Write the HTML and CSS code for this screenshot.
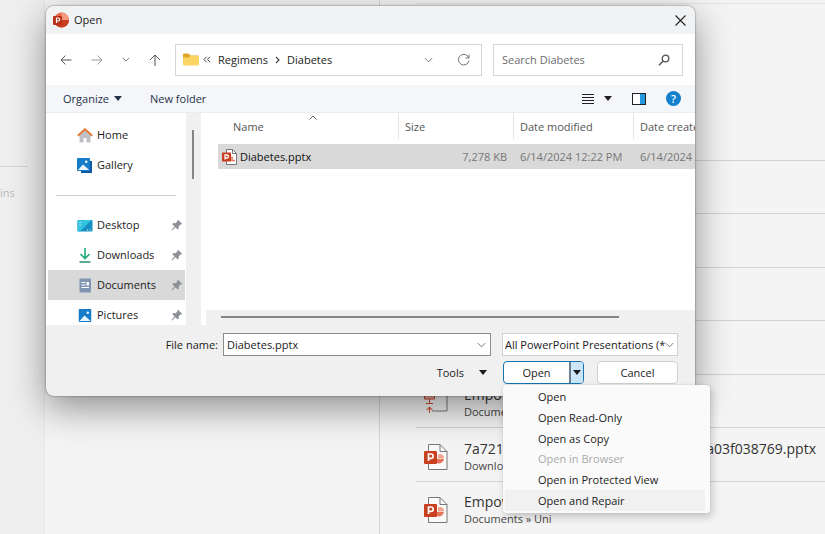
FILE: index.html
```html
<!DOCTYPE html>
<html lang="en">
<head>
<meta charset="utf-8">
<title>Open</title>
<link rel="stylesheet" href="styles.css">
</head>
<body>
<svg class="defs" aria-hidden="true">
  <symbol id="chevron" viewBox="0 0 10 6"><path d="M1 1l4 4 4-4" fill="none" stroke="currentColor"/></symbol>
  <symbol id="caret" viewBox="0 0 8 5"><path d="M0 0h8L4 5z" fill="currentColor"/></symbol>
  <symbol id="pin" viewBox="0 0 12 12"><path d="M7 .8L11.3 5l-1 .6-.9-.1-1.7 1.9.1 2-1.1 1.1-2.2-2.3L1 11.5l-.6-.5 3.2-3.5L1.300 5.200l1.100-1.100 2.100.2 1.900-1.800-.1-.9z" fill="#8d9197"/></symbol>
  <symbol id="ppt" viewBox="0 0 26 28">
    <path d="M5.500 1.500h11.500l7 7v18H5.500z" fill="#fafafa" stroke="#777"/>
    <path d="M17 1.500v7h7" fill="none" stroke="#777"/>
    <path d="M15 11.500a4 4 0 0 1 6 4h-6z" fill="#f3a58f"/>
    <path d="M14 16h7a5 5 0 0 1-7 4z" fill="#e8745a"/>
    <rect x="1" y="8" width="13" height="13" rx="1" fill="#c8401f"/>
    <path d="M5.500 18v-7h2.500a2.200 2.200 0 0 1 0 4.400h-2.500" fill="none" stroke="#fff" stroke-width="1.700"/>
  </symbol>
  <symbol id="ppt-small" viewBox="0 0 15 16">
    <path d="M4.500.5h6l4 4v11h-10z" fill="#fff" stroke="#777"/>
    <path d="M10.500.5v4h4" fill="none" stroke="#777"/>
    <path d="M10 7.500v4h3" fill="none" stroke="#e8745a" stroke-width="1.500"/>
    <rect y="3.500" width="9" height="9" fill="#c8401f"/>
    <path d="M3 10.500V6h2a1.500 1.500 0 0 1 0 3H3" fill="none" stroke="#fff" stroke-width="1.300"/>
  </symbol>
  <symbol id="picture" viewBox="0 0 14 14">
    <rect width="14" height="14" rx="1" fill="#167bc9"/>
    <path d="M1 13l5.500-6 6.500 6z" fill="#e9f6ff"/><circle cx="10" cy="4" r="1.300" fill="#fff"/>
  </symbol>
</svg>

<div class="app">
  <aside class="rail"><div class="rail-line"></div><span class="rail-text">ins</span></aside>
  <div class="pane"></div>
  <main class="recent">
    <ul class="files">
      <li></li><li></li><li></li><li></li>
      <li>
        <svg class="doc" viewBox="0 0 26 28"><path d="M10 2h14v20H9" fill="none" stroke="#777"/><path d="M1.500 3h10v7h-10zM6.500 10v4M3 14.500h7M6.500 24v-6M3.500 21l3-3 3 3" fill="#f2b5a8" stroke="#d0452c"/></svg>
        <div class="file"><span class="file-name">Empo</span><span class="file-path">Documents</span></div>
      </li>
      <li>
        <svg class="doc"><use href="#ppt"/></svg>
        <div class="file"><span class="file-name"><span>7a721</span><span>7a03f038769.pptx</span></span><span class="file-path">Downloads</span></div>
      </li>
      <li>
        <svg class="doc"><use href="#ppt"/></svg>
        <div class="file"><span class="file-name">Empow</span><span class="file-path">Documents » Uni</span></div>
      </li>
    </ul>
  </main>
</div>

<section class="dialog" role="dialog" aria-labelledby="dialog-title">
  <header class="titlebar">
    <svg class="logo" viewBox="0 0 16 16"><circle cx="8.500" cy="8" r="7.500" fill="#e8694a"/><path d="M8.500.5A7.500 7.500 0 0 1 16 8H8.500z" fill="#f39a7c"/><path d="M1 8h15a7.500 7.500 0 0 1-15 0z" fill="#c93f20"/><rect y="4" width="9" height="9" rx="1" fill="#b7321a"/><path d="M3.500 11V6h1.700a1.500 1.500 0 0 1 0 3H3.500" fill="none" stroke="#fff" stroke-width="1.200"/></svg>
    <h1 id="dialog-title">Open</h1>
    <button class="close" aria-label="Close"><svg viewBox="0 0 11 11"><path d="M.5.5l10 10M10.500.5l-10 10" stroke="#222" stroke-width="1.100"/></svg></button>
  </header>

  <nav class="navbar">
    <div class="arrows">
      <button aria-label="Back"><svg width="12" height="12" viewBox="0 0 12 12"><path d="M11.500 6H1M5.500 1.500L1 6l4.500 4.500" fill="none" stroke="#555"/></svg></button>
      <button aria-label="Forward"><svg width="12" height="12" viewBox="0 0 12 12"><path d="M.5 6H11M6.500 1.500L11 6l-4.500 4.500" fill="none" stroke="#999"/></svg></button>
      <button aria-label="Recent locations"><svg width="8" height="5"><use href="#chevron"/></svg></button>
      <button aria-label="Up"><svg width="12" height="12" viewBox="0 0 12 12"><path d="M6 12V1M1 6l5-5 5 5" fill="none" stroke="#555"/></svg></button>
    </div>
    <div class="address">
      <svg class="folder" viewBox="0 0 16 13"><path d="M0 1.500Q0 .5 1 .5h4.500L7.500 2.500H15q1 0 1 1V6H0z" fill="#e0a526"/><path d="M0 4.500h6L7.500 3H15q1 0 1 1v7.500q0 1-1 1H1q-1 0-1-1z" fill="#fbd564"/></svg>
      <svg class="crumbs-more" viewBox="0 0 8 7"><path d="M3.500.8L1 3.500l2.500 2.700M7 .8L4.500 3.500 7 6.200" fill="none" stroke="#444"/></svg>
      <button>Regimens</button>
      <svg class="crumb-sep" viewBox="0 0 5 8"><path d="M1 1l3 3-3 3" fill="none" stroke="#444" stroke-width="1.200"/></svg>
      <button class="current">Diabetes</button>
      <button aria-label="Previous locations"><svg width="9" height="6"><use href="#chevron"/></svg></button>
      <button aria-label="Refresh" class="refresh"><svg width="13" height="13" viewBox="0 0 13 13"><path d="M11.800 5A5.300 5.300 0 1 0 12 7.500M12 1.500V5H8.500" fill="none" stroke="#777"/></svg></button>
    </div>
    <label class="search"><input type="text" placeholder="Search Diabetes" aria-label="Search Diabetes"><svg width="12" height="12" viewBox="0 0 12 12"><circle cx="7.500" cy="4.500" r="3.300" fill="none" stroke="#555" stroke-width="1.300"/><path d="M5.200 7L1 11.200" stroke="#555" stroke-width="1.400"/></svg></label>
  </nav>

  <div class="toolbar">
    <button>Organize <svg width="8" height="5"><use href="#caret"/></svg></button>
    <button>New folder</button>
    <div class="views">
      <button aria-label="View"><svg width="12" height="10" viewBox="0 0 12 10"><path d="M0 .5h12M0 3.500h12M0 6.500h12M0 9.500h12" stroke="#222"/></svg></button>
      <button aria-label="View options"><svg width="8" height="5"><use href="#caret"/></svg></button>
      <button aria-label="Preview pane"><svg width="14" height="12" viewBox="0 0 14 12"><rect x=".5" y=".5" width="13" height="11" fill="#fff" stroke="#222"/><rect x="8" y="1" width="5" height="10" fill="#239ae0"/></svg></button>
      <button aria-label="Help" class="help">?</button>
    </div>
  </div>

  <div class="content">
    <div class="places">
      <ul>
        <li><svg class="place" viewBox="0 0 16 15"><path d="M2.500 7L8 2l5.500 5v7.500h-4V10h-3v4.500h-4z" fill="#bfc1c4"/><path d="M.8 7.800L8 1.200l7.200 6.600" fill="none" stroke="#e27a35" stroke-width="1.900"/></svg><span>Home</span></li>
        <li><svg class="place" viewBox="0 0 16 15"><path d="M4 3h11v12H4z" fill="#0c5aa5"/><use href="#picture" width="13" height="13"/></svg><span>Gallery</span></li>
        <li class="divider"><hr></li>
        <li><svg class="place" viewBox="0 0 16 15"><rect x=".5" y="2" width="15" height="11.500" rx="1" fill="#168fc2"/><path d="M.5 3q0-1 1-1h13L3 13.500H1.500q-1 0-1-1z" fill="#32c3df"/><path d="M2.500 4.500h1.200M2.500 7h1.200M10 12h1M12.500 12h1" stroke="#fff"/></svg><span>Desktop</span><svg class="pin"><use href="#pin"/></svg></li>
        <li><svg class="place" viewBox="0 0 16 15"><path d="M8 0v10.500M3.500 6L8 10.500 12.500 6" fill="none" stroke="#20ad7c" stroke-width="1.600"/><path d="M2.500 14h11" stroke="#238f70" stroke-width="1.500"/></svg><span>Downloads</span><svg class="pin"><use href="#pin"/></svg></li>
        <li class="selected"><svg class="place" viewBox="0 0 16 15"><rect x="2.500" y=".5" width="11.500" height="14" rx="1" fill="#8095b2"/><path d="M4.500 4.500h4M4.500 7h4M4.500 9.500h7.500" stroke="#fff"/><path d="M9.500 4h2.500v3.500H9.500z" fill="#fff"/></svg><span>Documents</span><svg class="pin"><use href="#pin"/></svg></li>
        <li><svg class="place" viewBox="0 0 16 15"><use href="#picture" x="1.500" y="1" width="13" height="13"/></svg><span>Pictures</span><svg class="pin"><use href="#pin"/></svg></li>
      </ul>
    </div>
    <div class="vscroll"><div class="vthumb"></div></div>
    <div class="listing">
      <div class="table-area">
        <table>
          <colgroup><col class="c-name"><col class="c-size"><col class="c-modified"><col class="c-created"></colgroup>
          <thead><tr><th class="sorted">Name<svg width="8" height="5" viewBox="0 0 8 5"><path d="M.5 4.500L4 1l3.500 3.500" fill="none" stroke="#666"/></svg></th><th>Size</th><th>Date modified</th><th>Date created</th></tr></thead>
          <tbody><tr><td class="name"><svg width="15" height="16"><use href="#ppt-small"/></svg>Diabetes.pptx</td><td class="size">7,278 KB</td><td>6/14/2024 12:22 PM</td><td>6/14/2024 12:22 PM</td></tr></tbody>
        </table>
      </div>
      <div class="hscroll"><div class="hthumb"></div></div>
    </div>
  </div>

  <footer class="footer">
    <div class="name-row">
      <label for="filename">File name:</label>
      <div class="combo"><input id="filename" type="text" value="Diabetes.pptx"><svg width="9" height="6"><use href="#chevron"/></svg></div>
      <div class="type"><select aria-label="File type"><option>All PowerPoint Presentations (*</option></select><svg width="9" height="6"><use href="#chevron"/></svg></div>
    </div>
    <div class="action-row">
      <button class="tools">Tools <svg width="8" height="5"><use href="#caret"/></svg></button>
      <div class="split">
        <button class="open">Open</button><button class="drop" aria-label="Open options" aria-expanded="true"><svg width="8" height="5"><use href="#caret"/></svg></button>
        <div class="menu" role="menu">
          <button role="menuitem">Open</button>
          <button role="menuitem">Open Read-Only</button>
          <button role="menuitem">Open as Copy</button>
          <button role="menuitem" disabled>Open in Browser</button>
          <button role="menuitem">Open in Protected View</button>
          <button role="menuitem" class="hover">Open and Repair</button>
        </div>
      </div>
      <button class="cancel">Cancel</button>
    </div>
  </footer>
</section>
</body>
</html>
```
FILE: styles.css
```css
* { box-sizing: border-box; }
body {
  margin: 0;
  height: 100vh;
  overflow: hidden;
  position: relative;
  background: #f4f4f4;
  color: #1c1c1c;
  font: 11px/16px "Open Sans", "Noto Sans", sans-serif;
}
button, input, select { font: inherit; color: inherit; margin: 0; padding: 0; border: 0; background: none; outline: 0; }
button { display: flex; align-items: center; justify-content: center; white-space: nowrap; }
ul { list-style: none; margin: 0; padding: 0; }
svg { flex: none; display: block; }
.defs { position: absolute; width: 0; height: 0; }

/* Start screen behind the dialog */
.app { display: grid; grid-template-columns: 45px 335px 1fr; height: 100%; }
.rail { background: #efefef; border-right: 1px solid #e6e6e6; padding-top: 166px; }
.rail-line { width: 28px; border-top: 1px solid #d4d4d4; }
.rail-text { display: block; margin-top: 18px; color: #bababa; }
.pane { border-right: 1px solid #d6d6d6; }
.recent { padding: 3px 0 0 36px; display: flex; min-width: 0; }
.files { flex: 1; display: flex; flex-direction: column; border-top: 1px solid #e2e2e2; padding-top: 156px; min-width: 0; }
.files li { flex: 1; border-top: 1px solid #d2d2d2; display: flex; align-items: center; gap: 15px; padding: 5px 9px 0 7px; min-height: 0; }
.doc { width: 26px; height: 28px; }
.file { flex: 1; display: flex; flex-direction: column; }
.file-name { display: flex; justify-content: space-between; font-size: 14px; line-height: 18px; color: #333; }
.file-path { color: #444; }

/* Dialog frame */
.dialog {
  position: absolute;
  top: 6px;
  left: 46px;
  right: 130px;
  background: #f0f0f0;
  border-radius: 8px;
  box-shadow: 0 0 2px rgba(0,0,0,.6), 0 12px 36px rgba(0,0,0,.42);
}
.titlebar { display: flex; align-items: center; height: 28px; padding: 0 9px 0 7px; gap: 5px; background: #f0f2f4; border-radius: 8px 8px 0 0; }
.logo { width: 16px; height: 16px; }
.titlebar h1 { flex: 1; margin: 0; font-size: 11px; font-weight: 400; }
.close svg { width: 11px; height: 11px; }

.navbar { display: flex; align-items: center; height: 51px; padding: 0 12px 0 14px; gap: 11px; background: #fff; }
.arrows { display: flex; align-items: center; justify-content: space-between; width: 101px; margin-right: 3px; color: #555; }
.address, .search { display: flex; align-items: center; height: 32px; border: 1px solid #d5d5d5; }
.address { flex: 1; padding: 0 11px 0 7px; color: #222; }
.folder { width: 16px; height: 13px; margin-right: 4px; }
.crumbs-more { width: 8px; height: 7px; margin-right: 7px; }
.crumb-sep { width: 5px; height: 8px; margin: 0 7px; }
.current { margin-right: auto; }
.address svg { color: #666; }
.refresh { margin-left: 24px; }
.search { width: 190px; padding: 0 12px 0 8px; }
.search input { flex: 1; min-width: 0; }
.search input::placeholder { color: #6c6c6c; opacity: 1; }

.toolbar { display: flex; align-items: center; height: 28px; padding: 0 14px 0 17px; gap: 28px; background: #f4f6f9; border-bottom: 1px solid #ebecef; color: #27334d; }
.toolbar button { gap: 5px; }
.views { margin-left: auto; display: flex; align-items: center; color: #222; }
.views button { margin-left: 10px; }
.views button:nth-child(n+3) { margin-left: 20px; }
.views .help { width: 15px; height: 15px; border-radius: 50%; background: #1280cc; color: #fff; font-weight: 600; }

/* Places and file list */
.content { display: flex; height: 212px; background: #fff; }
.places { width: 140px; padding: 7px 1px 0 2px; overflow: hidden; }
.places li { display: flex; align-items: center; height: 30px; padding: 0 2px 0 29px; gap: 4px; }
.places li span { flex: 1; }
.places .divider { padding: 0 9px 0 8px; }
.divider hr { flex: 1; margin: 0; border: 0; border-top: 1px solid #cfcfcf; }
.places .selected { background: #d9d9da; }
.place { width: 16px; height: 15px; }
.pin { width: 12px; height: 12px; }
.vscroll { width: 15px; background: #f0f0f0; padding: 17px 7px 0 6px; }
.vthumb { height: 49px; background: #858585; }
.listing { flex: 1; min-width: 0; display: flex; flex-direction: column; }
.table-area { flex: 1; overflow: hidden; padding-left: 17px; }
table { table-layout: fixed; width: 535px; border-collapse: collapse; white-space: nowrap; }
.c-name { width: 181px; }
.c-size { width: 115px; }
.c-modified { width: 120px; }
th { position: relative; height: 31px; padding: 0 0 4px 6px; text-align: left; font-weight: 400; color: #555; background: linear-gradient(#e3e3e3, #e3e3e3) right top / 1px 26px no-repeat; }
.sorted { padding-left: 15px; }
.sorted svg { position: absolute; top: 2px; left: 91px; }
td { height: 25px; padding: 0 0 0 6px; background: #d9d9d9; color: #777; }
.name { display: flex; align-items: center; gap: 3px; padding-left: 4px; color: #111; }
.size { text-align: right; padding-right: 7px; }
.hscroll { height: 15px; margin-left: 5px; padding: 6px 76px 0 15px; background: #f0f0f0; }
.hthumb { height: 2px; background: #858585; }

/* Footer controls */
.footer { height: 71px; padding: 8px 17px 0 0; display: flex; flex-direction: column; gap: 5px; }
.name-row, .action-row { display: flex; align-items: center; justify-content: flex-end; }
.name-row label { margin-right: 5px; }
.combo, .type { display: flex; align-items: center; background: #fff; height: 23px; color: #666; }
.combo { flex: 0 1 268px; border: 1px solid #8c8c8c; padding: 0 4px 0 3px; margin-right: 11px; }
.combo input { flex: 1; min-width: 0; color: #222; }
.type { width: 176px; border: 1px solid #d0d0d0; padding: 0 3px 0 2px; }
.type select { flex: 1; min-width: 0; appearance: none; color: #222; }
.tools { gap: 15px; margin-right: 16px; }
.split { position: relative; display: flex; width: 81px; height: 23px; border: 1px solid #1673b1; border-radius: 4px; background: #fff; }
.open { flex: 1; }
.drop { width: 14px; border-left: 2px solid #6d8192; background: #cbe5f9; border-radius: 0 3px 3px 0; }
.cancel { width: 81px; height: 23px; margin-left: 13px; border: 1px solid #d0d0d0; border-radius: 4px; background: #fff; }
.menu {
  position: absolute;
  top: 23px;
  left: -1px;
  width: 207px;
  height: 128px;
  padding: 2px 5px 2px 2px;
  display: grid;
  grid-auto-rows: 1fr;
  background: #fafafa;
  border-radius: 3px;
  box-shadow: 0 0 1px rgba(0,0,0,.3), 2px 4px 8px rgba(0,0,0,.2);
}
.menu button { justify-content: flex-start; padding-left: 33px; }
.menu button:disabled { color: #aaa; }
.menu .hover { background: #f1f1f1; }
```
